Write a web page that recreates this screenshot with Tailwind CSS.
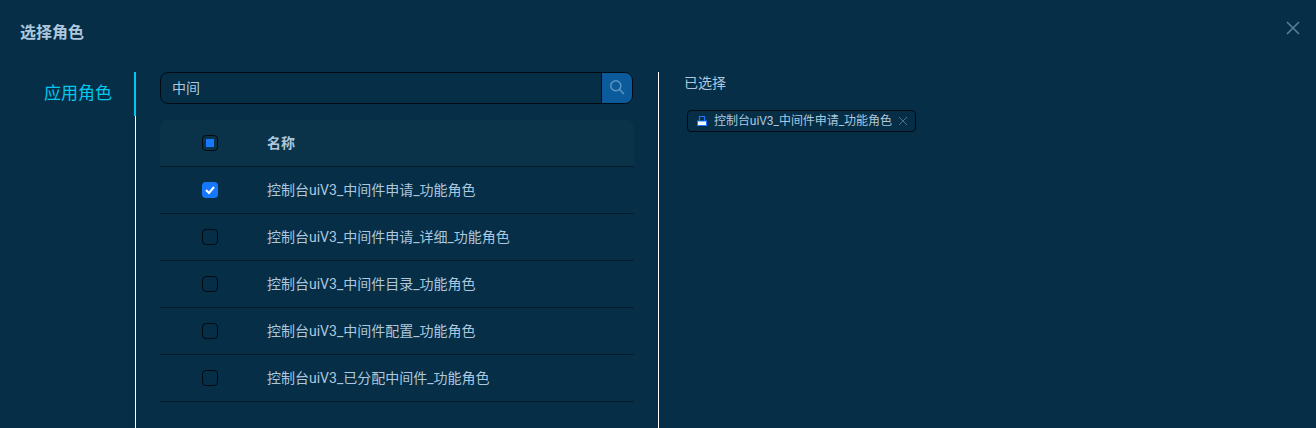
<!DOCTYPE html>
<html lang="zh-CN">
<head>
    <meta charset="UTF-8">
    <meta name="viewport" content="width=device-width, initial-scale=1.0">
    <title>选择角色</title>
    <script src="https://cdn.jsdelivr.net/npm/@tailwindcss/browser@4"></script>
</head>
<body class="h-screen overflow-hidden bg-[#062e47] text-[#adc8de] font-['Roboto','Noto_Sans_CJK_SC',sans-serif]">

    <div class="relative h-[428px] overflow-hidden">
        <!-- 标题 -->
        <header class="h-[72px] pl-5 pt-6">
            <h2 class="text-base leading-[18px] font-bold">选择角色</h2>
        </header>
        <button class="absolute top-5 right-[15px] text-[#5b7f98]">
            <svg class="w-4 h-4" viewBox="0 0 16 16" fill="none" stroke="currentColor" stroke-width="1.6"><path d="M2 2l12 12M14 2L2 14"/></svg>
        </button>

        <div class="flex h-[356px]">
            <!-- 左侧菜单 -->
            <aside class="w-[136px] shrink-0 border-r border-white">
                <div class="relative h-11 pl-11 pt-2.5 text-[#00c8f0] text-[17px] leading-[22px]">
                    应用角色
                    <span class="absolute top-0 right-[-1px] w-0.5 h-11 bg-[#00c8f0]"></span>
                </div>
            </aside>

            <!-- 列表 -->
            <section class="w-[523px] shrink-0 border-r border-white pl-6 pr-6">
                <div class="flex h-8 w-[473px] rounded-lg border border-[#010a12] overflow-hidden">
                    <input value="中间" class="flex-1 min-w-0 bg-transparent px-[11px] text-sm text-[#adc8de] outline-none">
                    <button class="w-[31px] flex items-center justify-center bg-[#0a5a9c] border-l border-[#010a12] text-[#5f96c2]">
                        <svg class="w-4 h-4 mb-[3px]" viewBox="0 0 16 16" fill="none" stroke="currentColor" stroke-width="1.5"><circle cx="6.8" cy="6.8" r="5"/><path d="M10.5 10.5L15 15"/></svg>
                    </button>
                </div>

                <div class="mt-4 w-[474px] text-sm">
                    <div class="flex items-center h-[47px] rounded-t-lg bg-[#0a3248] border-b border-[#021c2b] font-bold">
                        <div class="w-[100px] flex justify-center">
                            <span class="w-4 h-4 rounded-[4px] border-[1.5px] border-[#010a12] flex items-center justify-center"><span class="w-2 h-2 bg-[#1677ff]"></span></span>
                        </div>
                        <span class="pl-[7px]">名称</span>
                    </div>
                    <div class="flex items-center h-[47px] border-b border-[#021c2b]">
                        <div class="w-[100px] flex justify-center">
                            <span class="w-4 h-4 rounded-[4px] bg-[#1677ff] flex items-center justify-center">
                                <svg class="w-3 h-3" viewBox="0 0 12 12" fill="none" stroke="white" stroke-width="2"><path d="M2 6l3 3 5-6"/></svg>
                            </span>
                        </div>
                        <span class="pl-[7px]">控制台uiV3_中间件申请_功能角色</span>
                    </div>
                    <div class="flex items-center h-[47px] border-b border-[#021c2b]">
                        <div class="w-[100px] flex justify-center"><span class="w-4 h-4 rounded-[4px] border-[1.5px] border-[#010a12]"></span></div>
                        <span class="pl-[7px]">控制台uiV3_中间件申请_详细_功能角色</span>
                    </div>
                    <div class="flex items-center h-[47px] border-b border-[#021c2b]">
                        <div class="w-[100px] flex justify-center"><span class="w-4 h-4 rounded-[4px] border-[1.5px] border-[#010a12]"></span></div>
                        <span class="pl-[7px]">控制台uiV3_中间件目录_功能角色</span>
                    </div>
                    <div class="flex items-center h-[47px] border-b border-[#021c2b]">
                        <div class="w-[100px] flex justify-center"><span class="w-4 h-4 rounded-[4px] border-[1.5px] border-[#010a12]"></span></div>
                        <span class="pl-[7px]">控制台uiV3_中间件配置_功能角色</span>
                    </div>
                    <div class="flex items-center h-[47px] border-b border-[#021c2b]">
                        <div class="w-[100px] flex justify-center"><span class="w-4 h-4 rounded-[4px] border-[1.5px] border-[#010a12]"></span></div>
                        <span class="pl-[7px]">控制台uiV3_已分配中间件_功能角色</span>
                    </div>
                </div>
            </section>

            <!-- 已选择 -->
            <section class="flex-1 pl-[25px]">
                <div class="text-sm leading-[22px]">已选择</div>
                <div class="mt-4 ml-[3px] inline-flex items-center h-[22px] w-[229px] rounded-[4px] border border-[#010a12] pl-2 text-xs">
                    <svg class="w-3 h-3 shrink-0" viewBox="0 0 12 12"><path d="M3.5 6V1.5h5V6" fill="none" stroke="#1677ff" stroke-width="1.2"/><rect x="1.5" y="6" width="9" height="4.5" fill="white" stroke="#1677ff"/></svg>
                    <span class="ml-1.5 tracking-[-0.05px]">控制台uiV3_中间件申请_功能角色</span>
                    <svg class="w-2.5 h-2.5 ml-1.5 text-[#4f7187]" viewBox="0 0 10 10" fill="none" stroke="currentColor"><path d="M1 1l8 8M9 1L1 9"/></svg>
                </div>
            </section>
        </div>
    </div>
</body>
</html>
